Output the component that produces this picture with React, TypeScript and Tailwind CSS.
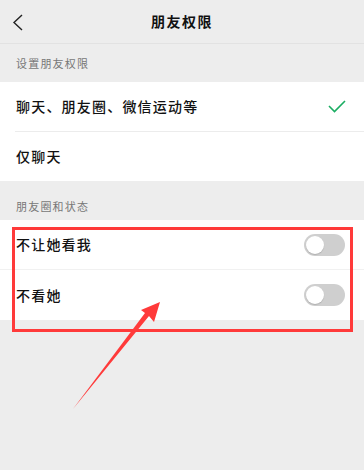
export default function App() {
  const font = { fontFamily: '"Noto Sans CJK SC", "Noto Sans", sans-serif' };

  return (
    <main
      className="relative w-[364px] h-[470px] bg-[#ededed] overflow-hidden"
      style={font}
    >
      {/* header */}
      <div className="relative h-[44px] flex items-center justify-center border-b border-[#e2e2e2]">
        <svg
          className="absolute left-[12px] top-[14px]"
          width="12"
          height="17"
          viewBox="0 0 12 17"
        >
          <path d="M10 1 L2 8.5 L10 16" fill="none" stroke="#222" strokeWidth="1.4" />
        </svg>
        <h1 className="text-[14px] font-bold text-[#111] tracking-[1.5px]">朋友权限</h1>
      </div>

      <div className="h-[38px] flex items-center px-[16px] text-[11px] tracking-[1.2px] text-[#777]">
        设置朋友权限
      </div>

      <div className="bg-white">
        <div className="ml-[15px] h-[50px] flex items-center justify-between pr-[16px] border-b border-[#ececec]">
          <span className="ml-[1px] text-[14px] tracking-[1.2px] text-[#111] font-medium">
            聊天、朋友圈、微信运动等
          </span>
          <svg width="18" height="13" viewBox="0 0 18 13" className="mr-[2px]">
            <path d="M1 6 L6.5 11.5 L17 1" fill="none" stroke="#1aad62" strokeWidth="1.6" />
          </svg>
        </div>
        <div className="h-[49px] flex items-center px-[16px]">
          <span className="text-[14px] tracking-[1.2px] text-[#111] font-medium">仅聊天</span>
        </div>
      </div>

      <div className="h-[39px] flex items-end pb-[6px] px-[16px] text-[11px] tracking-[1.2px] text-[#777]">
        朋友圈和状态
      </div>

      <div className="bg-white">
        {["不让她看我", "不看她"].map((label, i) => (
          <div
            key={label}
            className={`h-[50px] flex items-center justify-between px-[16px] ${
              i === 0 ? "border-b border-[#f1f1f1]" : ""
            }`}
          >
            <span className="text-[14px] tracking-[1.2px] text-[#111] font-medium">{label}</span>
            <div className="w-[41px] h-[22px] rounded-full bg-[#cfcfcf] p-[2px] mr-[3px]">
              <div className="w-[18px] h-[18px] rounded-full bg-white shadow-[0_1px_1px_rgba(0,0,0,0.15)]" />
            </div>
          </div>
        ))}
      </div>

      {/* red annotation box */}
      <div className="absolute left-[12px] top-[227px] w-[341px] h-[105px] border-[3px] border-[#ff3a3a]" />

      {/* red arrow */}
      <svg className="absolute left-0 top-0" width="364" height="470" viewBox="0 0 364 470">
        <polygon
          points="160,302 154,322 149,316 73,409 145,313 141,310"
          fill="#ff3a3a"
        />
      </svg>
    </main>
  );
}
